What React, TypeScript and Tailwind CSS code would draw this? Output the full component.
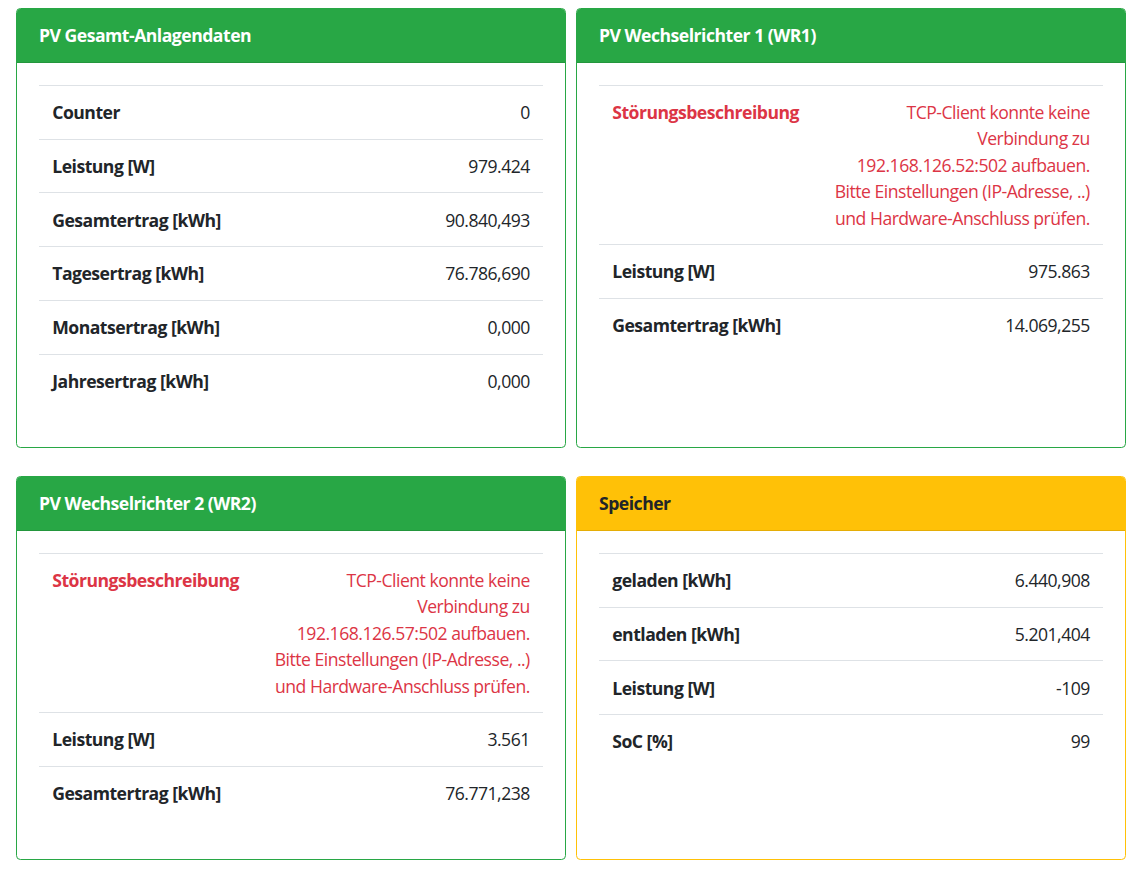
import React from 'react';

type Row = { label: string; value: string[]; error?: boolean };
type Panel = { title: string; tone: 'green' | 'yellow'; rows: Row[] };

const errorText = (ip: string) => [
  'TCP-Client konnte keine',
  'Verbindung zu',
  `${ip} aufbauen.`,
  'Bitte Einstellungen (IP-Adresse, ..)',
  'und Hardware-Anschluss prüfen.',
];

const panels: Panel[] = [
  {
    title: 'PV Gesamt-Anlagendaten',
    tone: 'green',
    rows: [
      { label: 'Counter', value: ['0'] },
      { label: 'Leistung [W]', value: ['979.424'] },
      { label: 'Gesamtertrag [kWh]', value: ['90.840,493'] },
      { label: 'Tagesertrag [kWh]', value: ['76.786,690'] },
      { label: 'Monatsertrag [kWh]', value: ['0,000'] },
      { label: 'Jahresertrag [kWh]', value: ['0,000'] },
    ],
  },
  {
    title: 'PV Wechselrichter 1 (WR1)',
    tone: 'green',
    rows: [
      { label: 'Störungsbeschreibung', value: errorText('192.168.126.52:502'), error: true },
      { label: 'Leistung [W]', value: ['975.863'] },
      { label: 'Gesamtertrag [kWh]', value: ['14.069,255'] },
    ],
  },
  {
    title: 'PV Wechselrichter 2 (WR2)',
    tone: 'green',
    rows: [
      { label: 'Störungsbeschreibung', value: errorText('192.168.126.57:502'), error: true },
      { label: 'Leistung [W]', value: ['3.561'] },
      { label: 'Gesamtertrag [kWh]', value: ['76.771,238'] },
    ],
  },
  {
    title: 'Speicher',
    tone: 'yellow',
    rows: [
      { label: 'geladen [kWh]', value: ['6.440,908'] },
      { label: 'entladen [kWh]', value: ['5.201,404'] },
      { label: 'Leistung [W]', value: ['-109'] },
      { label: 'SoC [%]', value: ['99'] },
    ],
  },
];

const DataCard: React.FC<{ panel: Panel }> = ({ panel }) => {
  const green = panel.tone === 'green';
  return (
    <div
      className={`flex flex-col rounded-[4.4px] border bg-white overflow-hidden ${
        green ? 'border-[#28a745]' : 'border-[#ffc107]'
      }`}
    >
      <div
        className={`px-[22px] py-[13.2px] font-bold border-b border-black/10 ${
          green ? 'bg-[#28a745] text-white' : 'bg-[#ffc107] text-[#212529]'
        }`}
      >
        {panel.title}
      </div>
      <div className="p-[22px] pb-[39.6px]">
        {panel.rows.map(row => (
          <div key={row.label} className="flex justify-between border-t border-[#dee2e6] px-[13.2px] py-[13.2px]">
            <div className={`font-bold whitespace-nowrap ${row.error ? 'text-[#dc3545]' : 'text-[#212529]'}`}>
              {row.label}
            </div>
            <div className={`text-right whitespace-nowrap ${row.error ? 'text-[#dc3545]' : 'text-[#212529]'}`}>
              {row.value.map(line => (
                <div key={line}>{line}</div>
              ))}
            </div>
          </div>
        ))}
      </div>
    </div>
  );
};

export default function App() {
  return (
    <div
      className="bg-white min-h-screen text-[17.6px] leading-[26.4px] tracking-[-0.5px] text-[#212529]"
      style={{ fontFamily: '"Segoe UI", "Open Sans", "Noto Sans", sans-serif' }}
    >
      <div className="grid grid-cols-2 gap-x-[10px] gap-y-[28px] pl-[16px] pr-[8px] pt-[8px] pb-[15px]">
        {panels.map(p => (
          <DataCard key={p.title} panel={p} />
        ))}
      </div>
    </div>
  );
}
